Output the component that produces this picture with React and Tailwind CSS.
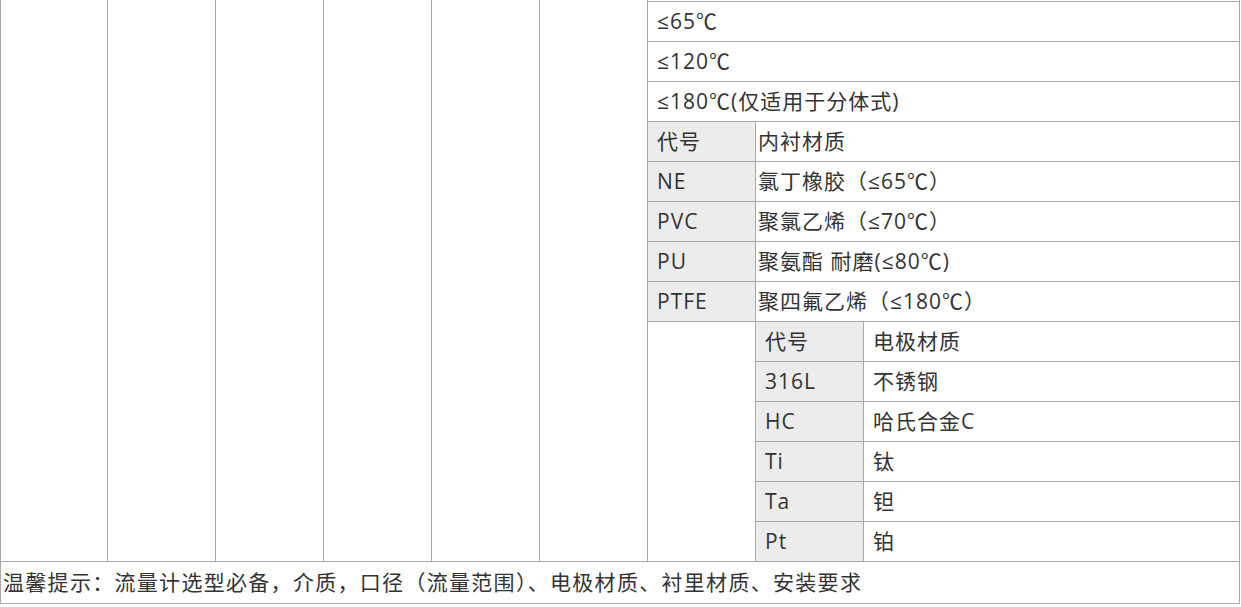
const line = 'bg-[#a9a9a9]'

const tempRows = ['≤65℃', '≤120℃', '≤180℃(仅适用于分体式)']

const liningRows = [
  ['NE', '氯丁橡胶（≤65℃）'],
  ['PVC', '聚氯乙烯（≤70℃）'],
  ['PU', '聚氨酯 耐磨(≤80℃)'],
  ['PTFE', '聚四氟乙烯（≤180℃）'],
]

const electrodeRows = [
  ['316L', '不锈钢'],
  ['HC', '哈氏合金C'],
  ['Ti', '钛'],
  ['Ta', '钽'],
  ['Pt', '铂'],
]

function Cell({ className = '', gray, tight, children }) {
  return (
    <div className={`${gray ? 'bg-[#ececec]' : 'bg-white'} flex items-center ${tight ? 'pl-[2px]' : 'pl-[9px]'} whitespace-nowrap ${className}`}>
      {children}
    </div>
  )
}

export default function App() {
  return (
    <div
      className={`w-[1240px] ${line} grid gap-px px-px pb-px text-[21px] tracking-[1px] text-[#333]`}
      style={{ fontFamily: '"Open Sans", "Noto Sans CJK SC", sans-serif' }}
    >
      <div className="grid gap-px grid-cols-[106px_107px_107px_107px_107px_107px_107px_107px_375px] grid-rows-[41px_repeat(13,39px)]">
        {[0, 1, 2, 3, 4, 5].map(i => (
          <div key={i} className="bg-white row-span-14" />
        ))}

        {/* first row: top border sits 1px below page top */}
        <div className="col-span-3 bg-white pt-px">
          <div className={`h-px ${line}`} />
          <div className="h-[39px] flex items-center pl-[9px]">{tempRows[0]}</div>
        </div>
        {tempRows.slice(1).map(t => (
          <Cell key={t} className="col-span-3">{t}</Cell>
        ))}

        <Cell gray>代号</Cell>
        <Cell tight className="col-span-2">内衬材质</Cell>
        {liningRows.map(([code, name]) => (
          <div key={code} className="contents">
            <Cell gray>{code}</Cell>
            <Cell tight className="col-span-2">{name}</Cell>
          </div>
        ))}

        <div className="bg-white row-span-6" />
        <Cell gray>代号</Cell>
        <Cell>电极材质</Cell>
        {electrodeRows.map(([code, name]) => (
          <div key={code} className="contents">
            <Cell gray>{code}</Cell>
            <Cell>{name}</Cell>
          </div>
        ))}
      </div>

      <div className="bg-white h-[41px] flex items-center pl-[2px] whitespace-nowrap tracking-[1.3px]">
        温馨提示：流量计选型必备，介质，口径（流量范围）、电极材质、衬里材质、安装要求
      </div>
    </div>
  )
}
